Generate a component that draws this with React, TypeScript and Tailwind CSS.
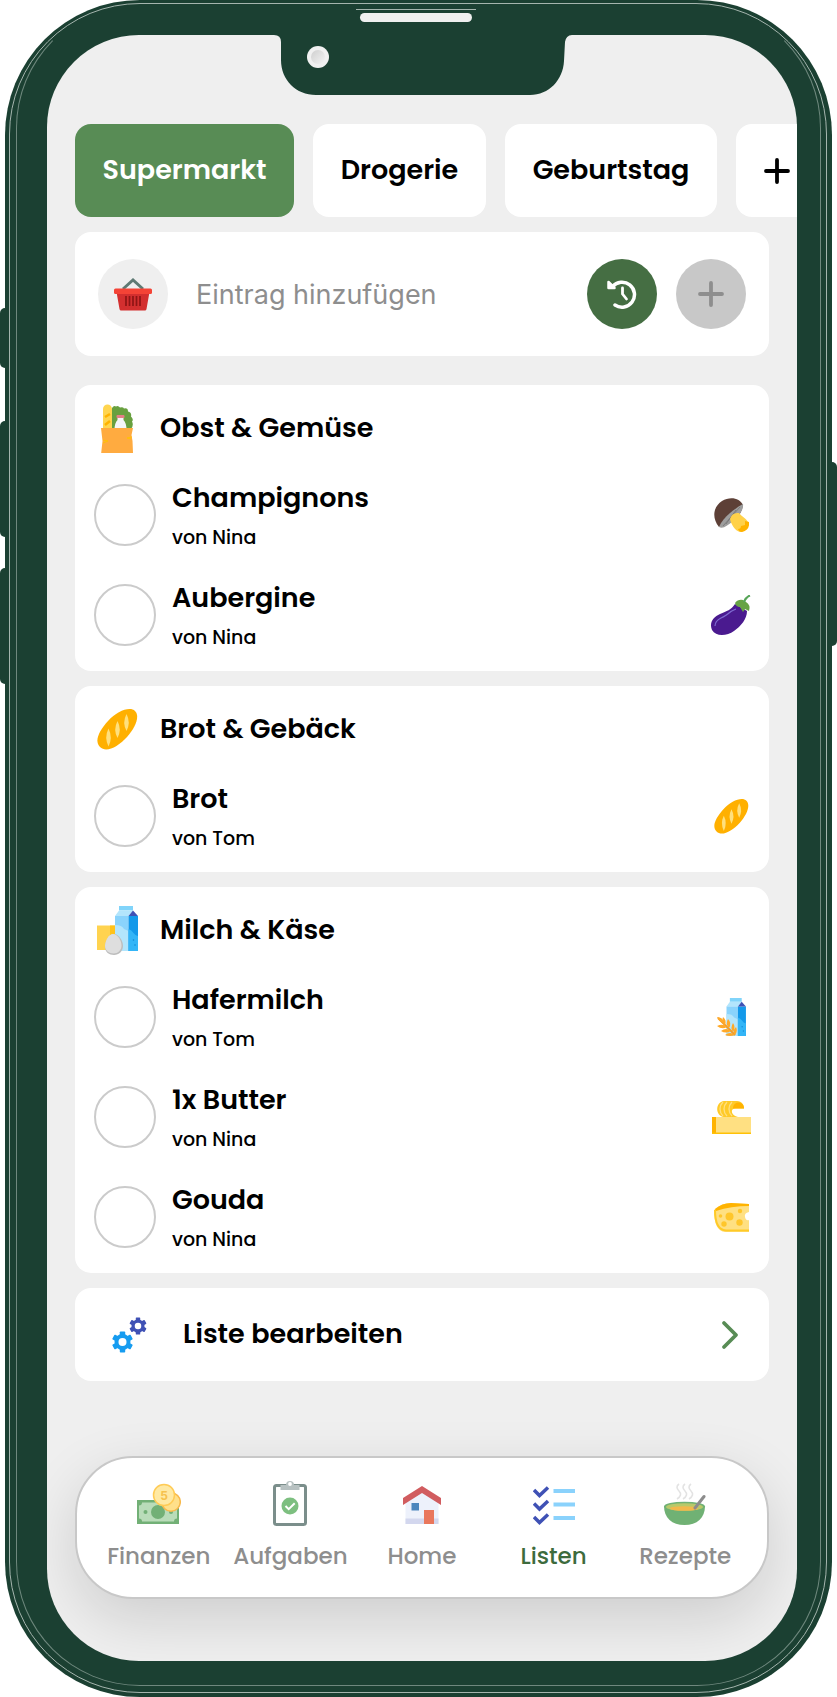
import { useState, type ReactNode } from 'react';

type ListItem = { id: string; name: string; by: string; icon: ReactNode };
type Category = { title: string; icon: ReactNode; items: ListItem[] };

function BasketIcon() {
  return (
    <svg width="38" height="33" viewBox="0 0 38 33">
      <path d="M9 11 19 2l10 9" fill="none" stroke="#5f7a74" strokeWidth="3" />
      <path d="M2.5 14h33L32.5 31q-.2 1.5-1.6 1.5H7.1q-1.4 0-1.6-1.5z" fill="#d32f2f" />
      <rect y="10.5" width="38" height="5.5" rx="1.5" fill="#f44336" />
      <path d="M12 18v10M15.5 18v10M19 18v10M22.5 18v10M26 18v10" stroke="#8e1515" strokeWidth="1.7" />
    </svg>
  );
}

function GroceriesIcon() {
  return (
    <svg width="32" height="49" viewBox="0 0 32 49">
      <path d="M11 25V4q2-3 4-1.500 2-1.500 4 1 3-1 4 1 4-1 4 3 4 1 3 5 3 3 1 5 2 4-1 7.500z" fill="#68a03f" />
      <path d="M2 26V5a4.500 4.500 0 0 1 9 0v21z" fill="#ffd54f" />
      <path d="m4 13 5-3M4 21l5-4" stroke="#ffb300" strokeWidth="2.5" />
      <path d="M16.500 13h6v3q3 3 3 10h-12q0-7 3-10z" fill="#f4f6f7" />
      <rect x="15.500" y="11" width="8" height="3" rx="1" fill="#e57f86" />
      <path d="M0 24h32l-1.500 7 1 6 .5 12H.2L1.500 37z" fill="#ffab40" />
      <path d="m2 36 5 1-5 2M31 33l-5 1 4 1" fill="none" stroke="#ffc107" />
    </svg>
  );
}

function BreadIcon({ className }: { className: string }) {
  return (
    <svg className={className} viewBox="0 0 41 41">
      <path d="M3 38C-3 32 2 22 11 12S33-3 38 2s1 16-8 26S9 44 3 38z" fill="#ffb000" />
      <g fill="#ffe07d">
        <path d="M11.500 19.500q4.500 9 0 18-4.500-9 0-18z" />
        <path d="M20.500 12q4.500 8.500 0 17-4.500-8.500 0-17z" />
        <path d="M29.500 5q4.500 8.500 0 17-4.500-8.500 0-17z" />
      </g>
    </svg>
  );
}

// milk carton, 23 x 45, shared by the category icon and the oat milk icon
function Carton() {
  return (
    <g>
      <path d="M4 0h14v4.500H4z" fill="#81d4fa" />
      <path d="M4 4.500h14L13.500 10H0z" fill="#b3e5fc" />
      <path d="M0 10h13.500v35H0z" fill="#8ad3fc" />
      <path d="M0 19q7 0 9 4l4.500 2v20H0z" fill="#b3e5fc" />
      <path d="M13.500 10H23v35h-9.500z" fill="#1399ea" />
      <path d="M13.500 23q3 1 5 4t4.500 3v15h-9.500z" fill="#33b5f7" />
      <path d="M18 4.500 23 10h-9.500z" fill="#3f51b5" />
      <circle cx="18.500" cy="34" r=".8" fill="#1288d6" />
      <circle cx="20" cy="39" r=".8" fill="#1288d6" />
    </g>
  );
}

function DairyIcon() {
  return (
    <svg width="41" height="49" viewBox="0 0 41 49">
      <path d="M0 19.500h18V44H0z" fill="#ffd34f" />
      <path d="M13 19.500h5V29h-5z" fill="#ffc21a" />
      <g transform="translate(18)">
        <Carton />
      </g>
      <path d="M17 28c5 0 9 7 9 12s-4 9-9 9-9-3-9-8 4-13 9-13z" fill="#bdbdbd" />
      <path d="M16 28c5 0 8.500 7 8.500 11.500S21 47.500 16.500 47.500 8 44.500 8 40s3.500-12 8-12z" fill="#dedede" />
    </svg>
  );
}

function MushroomIcon() {
  return (
    <svg width="35" height="34" viewBox="0 0 35 34">
      <path d="M5 29C-3 19 0 8 8 3s18-3 21 4q-2 12-11 16T5 29z" fill="#5d4037" />
      <path d="M29 6c1 5-4 12-10 17S9 31 5 29c2-5 6-10 11-14S25 8 29 6z" fill="#9e9e9e" />
      <path d="M26 9 9 28M22 12 12 26" stroke="#757575" strokeWidth=".8" />
      <path d="M16 21q2-7 9-6c3 4 7 5 9 9 2 5-3 10-8 10-5-1-9-8-10-13z" fill="#ffd149" />
      <path d="M24 31q3 0 3-3l4-1v-4l4 1q1 8-7 10-3 0-4-3z" fill="#ffb300" />
    </svg>
  );
}

function AubergineIcon() {
  return (
    <svg width="40" height="40" viewBox="0 0 40 40">
      <path d="M24 9l12 7c0 8-6 15-13 20S5 42 1 35c-3-7 1-13 8-16S20 15 24 9z" fill="#4a1a8f" />
      <path d="M4 31q0-5 6-8t8-5 7-4" fill="none" stroke="#7e6bd0" strokeWidth="1.2" />
      <path d="M24 8q3-4 8-3l3 2q5 3 3 9l-4-2-2 3-3-5q-4 0-5-4z" fill="#66a344" />
      <path d="M33 7q2-5 6-6.500" fill="none" stroke="#57a558" strokeWidth="2.2" />
    </svg>
  );
}

function OatMilkIcon() {
  return (
    <svg width="29" height="38" viewBox="0 0 29 38">
      <g transform="translate(9.500) scale(.845)">
        <Carton />
      </g>
      <path d="M1 20 18 37" stroke="#f29b28" strokeWidth="2" />
      <g fill="#ffa928">
        <path d="M0 19q6 0 7 6-5-1-7-6z" />
        <path d="M6 19q4 3 2 8-4-3-2-8zM11 21q4 4 1 9-4-4-1-9zM16 25q3 4 0 9-3-4 0-9zM19 29q2 4-1 8-3-4 1-8z" />
        <path d="M0 28q6-3 10 1-5 3-10-1zM4 33q5-4 10 0-5 3-10 0zM8 37q5-4 10 0-5 2-10 0z" />
      </g>
    </svg>
  );
}

function ButterIcon() {
  return (
    <svg width="39" height="33" viewBox="0 0 39 33">
      <path d="M12 0h13c5 0 7 4 7 7.500h-8q-5 0-4 4 1 3 6 4.500H12C3 15 3 1 12 0z" fill="#ffca28" />
      <path d="M32 7.500c0-7.500-10-8-11-1v1z" fill="#ffb300" />
      <path d="M11 1c-4 4-4 10 0 14M15 1c-4 4-4 10 0 14M20 1c-4 4-4 10 0 14" fill="none" stroke="#ffe082" strokeWidth="1.3" />
      <path d="M0 16h39v17H0z" fill="#ffe082" />
      <path d="M0 16h4v17H0z" fill="#ffb300" />
      <path d="M0 31.500h39V33H0z" fill="#ffc107" />
    </svg>
  );
}

function CheeseIcon() {
  return (
    <svg width="35" height="29" viewBox="0 0 35 29">
      <path d="M0 7q7-7 17-7l18 1v8q-5 1-4 5t4 3v12H11Q0 28 0 7z" fill="#ffe082" />
      <path d="M1 6q7-6 16-6l18 1v2q-18 0-33 5z" fill="#ffb300" />
      <path d="M1 7q0 20 11 20.500h23" fill="none" stroke="#ffca28" strokeWidth="2" />
      <g fill="#ffc62b">
        <circle cx="15.500" cy="13.500" r="4" />
        <circle cx="26" cy="8" r="2.200" />
        <circle cx="25.500" cy="19.500" r="3.200" />
        <circle cx="10" cy="21" r="2.700" />
        <circle cx="6.500" cy="13" r="1.800" />
      </g>
    </svg>
  );
}

function Gear({ cx, cy, scale, color }: { cx: number; cy: number; scale: number; color: string }) {
  return (
    <g transform={`translate(${cx} ${cy}) scale(${scale})`} fill={color}>
      {[0, 60, 120].map((angle) => (
        <rect key={angle} x="-2.700" y="-10.500" width="5.400" height="21" rx=".8" transform={`rotate(${angle})`} />
      ))}
      <circle r="8" />
      <circle r="4" fill="#fff" />
    </g>
  );
}

function GearsIcon() {
  return (
    <svg width="35" height="36" viewBox="0 0 35 36">
      <Gear cx={26} cy={9} scale={0.82} color="#3f51b5" />
      <Gear cx={10.5} cy={25} scale={1} color="#169cf0" />
    </svg>
  );
}

function HistoryIcon() {
  return (
    <svg width="30" height="30" viewBox="0 0 30 30" fill="none" stroke="#fff" strokeLinecap="round" strokeLinejoin="round">
      <path d="M5.500 7.500A12.500 12.500 0 1 1 8 26" strokeWidth="3.500" />
      <path d="M1.500 3v6h6z" fill="#fff" strokeWidth="2.500" />
      <path d="M15.500 9v6l4 5" strokeWidth="2.800" />
    </svg>
  );
}

function PlusIcon() {
  return (
    <svg className="shrink-0" width="26" height="26" viewBox="0 0 26 26" stroke="currentColor" strokeWidth="3.800" strokeLinecap="round">
      <path d="M13 2v22M2 13h22" />
    </svg>
  );
}

function MoneyIcon() {
  return (
    <svg width="44" height="46" viewBox="0 -4 44 46">
      <path d="M0 16h42v24H0z" fill="#72b076" />
      <path d="M5 18.500h32q0 3 3 3v13q-3 0-3 3H5q0-3-3-3v-13q3 0 3-3z" fill="#b9dcb9" />
      <circle cx="21" cy="28" r="7" fill="#72b076" />
      <circle cx="8.500" cy="28" r="2" fill="#72b076" />
      <circle cx="34" cy="28" r="2" fill="#72b076" />
      <circle cx="34" cy="18" r="9.300" fill="#ffe08a" stroke="#f8b84a" strokeWidth="1.5" />
      <circle cx="27" cy="11" r="10.500" fill="#ffe9a3" stroke="#ffcb55" strokeWidth="1.5" />
      <text x="27" y="15.500" textAnchor="middle" fontSize="12" fontWeight="700" fill="#f6c14d" className="font-['Inter',sans-serif]">5</text>
    </svg>
  );
}

function ClipboardIcon() {
  return (
    <svg width="34" height="46" viewBox="0 0 34 46">
      <rect x="1.500" y="5.500" width="31" height="39" rx="2" fill="#fff" stroke="#7b8e8b" strokeWidth="3" />
      <path d="M7.500 10V5H13a4 4 0 0 1 8 0h5.500v5z" fill="#b7c1c1" />
      <circle cx="17" cy="4" r="1.900" fill="#fff" />
      <circle cx="17" cy="26" r="8.500" fill="#7dbf80" />
      <path d="m12.500 26 3.200 3.200 6-6" fill="none" stroke="#fff" strokeWidth="2" />
    </svg>
  );
}

function HouseIcon() {
  return (
    <svg width="38" height="46" viewBox="0 -6 38 46">
      <path d="M2.500 16 19 3l16.500 13v22h-33z" fill="#edf1fb" />
      <path d="M2.500 32.500h33V38h-33z" fill="#d3d7ee" />
      <path d="M0 12 19 0l19 12v7L19 7 0 19z" fill="#d15c5f" />
      <path d="M8.500 17H16v7.500H8.500z" fill="#4d87bd" />
      <path d="M21 24h10v14H21z" fill="#e9775c" />
    </svg>
  );
}

function ChecklistIcon() {
  return (
    <svg width="42" height="46" viewBox="0 -5 42 46">
      <path d="m1 5 5.500 5.500 8.500-8M1 18.500l5.500 5.500 8.500-8M1 32l5.500 5.500 8.500-8" fill="none" stroke="#3f51b5" strokeWidth="3.500" />
      <path d="M20.500 6H42M20.500 19.500H42M20.500 33H42" stroke="#8ad2fc" strokeWidth="4.200" />
    </svg>
  );
}

function SoupIcon() {
  return (
    <svg width="42" height="46" viewBox="0 -4 42 46">
      <g fill="none" stroke="#e3e3e3" strokeWidth="1.6">
        <path d="M15 0q-4 3 0 7t-2 8M21 0q-4 3 0 7t-2 8M27 0q-4 3 0 7t-2 8" />
      </g>
      <path d="M0 22h41c0 12-8 19-20.500 19S0 34 0 22z" fill="#70b174" />
      <ellipse cx="20.500" cy="22.500" rx="20.500" ry="4.800" fill="#70b174" />
      <ellipse cx="20.500" cy="23" rx="18.500" ry="3.800" fill="#b8c96a" />
      <ellipse cx="20" cy="24.500" rx="14" ry="2.300" fill="#f2b84c" />
      <path d="m31 24 9-11.500" stroke="#8c8c8c" strokeWidth="3" strokeLinecap="round" />
    </svg>
  );
}

const LISTS = [
  { name: 'Supermarkt', width: 'min-w-[219px]' },
  { name: 'Drogerie', width: 'min-w-[173px]' },
  { name: 'Geburtstag', width: 'min-w-[212px]' },
];

const CATEGORIES: Category[] = [
  {
    title: 'Obst & Gemüse',
    icon: <GroceriesIcon />,
    items: [
      { id: 'champignons', name: 'Champignons', by: 'Nina', icon: <MushroomIcon /> },
      { id: 'aubergine', name: 'Aubergine', by: 'Nina', icon: <AubergineIcon /> },
    ],
  },
  {
    title: 'Brot & Gebäck',
    icon: <BreadIcon className="size-[41px]" />,
    items: [{ id: 'brot', name: 'Brot', by: 'Tom', icon: <BreadIcon className="size-[35px]" /> }],
  },
  {
    title: 'Milch & Käse',
    icon: <DairyIcon />,
    items: [
      { id: 'hafermilch', name: 'Hafermilch', by: 'Tom', icon: <OatMilkIcon /> },
      { id: 'butter', name: '1x Butter', by: 'Nina', icon: <ButterIcon /> },
      { id: 'gouda', name: 'Gouda', by: 'Nina', icon: <CheeseIcon /> },
    ],
  },
];

const NAV = [
  { label: 'Finanzen', icon: <MoneyIcon /> },
  { label: 'Aufgaben', icon: <ClipboardIcon /> },
  { label: 'Home', icon: <HouseIcon /> },
  { label: 'Listen', icon: <ChecklistIcon /> },
  { label: 'Rezepte', icon: <SoupIcon /> },
];

function ListTabs() {
  const [active, setActive] = useState('Supermarkt');

  return (
    <div className="flex gap-[19px] overflow-hidden pl-7">
      {LISTS.map((list) => (
        <button
          key={list.name}
          type="button"
          onClick={() => setActive(list.name)}
          className={`h-[93px] shrink-0 rounded-2xl text-[27px] font-semibold ${list.width} ${
            active === list.name ? 'bg-[#588c55] text-white' : 'bg-white text-black'
          }`}
        >
          {list.name}
        </button>
      ))}
      <button type="button" aria-label="Neue Liste" className="flex h-[93px] w-[82px] shrink-0 items-center rounded-2xl bg-white pl-7">
        <PlusIcon />
      </button>
    </div>
  );
}

function AddEntry() {
  return (
    <form className="flex h-[124px] items-center rounded-2xl bg-white px-[23px]" onSubmit={(e) => e.preventDefault()}>
      <div className="flex size-[70px] shrink-0 items-center justify-center rounded-full bg-[#efefef]">
        <BasketIcon />
      </div>
      <input
        type="text"
        aria-label="Eintrag hinzufügen"
        placeholder="Eintrag hinzufügen"
        className="mx-7 h-12 min-w-0 flex-1 bg-transparent font-['Inter',sans-serif] text-[27px] outline-none placeholder:text-[#8e8e8e]"
      />
      <button type="button" aria-label="Verlauf" className="flex size-[70px] shrink-0 items-center justify-center rounded-full bg-[#456e43]">
        <HistoryIcon />
      </button>
      <button
        type="submit"
        aria-label="Hinzufügen"
        className="ml-[19px] flex size-[70px] shrink-0 items-center justify-center rounded-full bg-[#c8c8c8] text-[#8e8e8e]"
      >
        <PlusIcon />
      </button>
    </form>
  );
}

function CategoryCard({ category }: { category: Category }) {
  return (
    <section className="rounded-2xl bg-white pb-[6px]">
      <h2 className="flex h-20 items-center gap-[22px] pt-[6px] pl-[21px] text-[27px] font-semibold">
        <span className="flex w-[42px] justify-center">{category.icon}</span>
        {category.title}
      </h2>
      <ul>
        {category.items.map((item) => (
          <li key={item.id} className="flex h-[100px] items-center pr-[18px] pl-[19px]">
            <input
              id={item.id}
              type="checkbox"
              className="size-[62px] shrink-0 appearance-none rounded-full border-2 border-[#cbcbcb] checked:bg-[#588c55]"
            />
            <label htmlFor={item.id} className="ml-4 flex flex-1 flex-col gap-1">
              <span className="text-[27px] leading-[42px] font-semibold">{item.name}</span>
              <span className="text-[19px] leading-[30px] font-medium">von {item.by}</span>
            </label>
            <span className="flex w-10 justify-center">{item.icon}</span>
          </li>
        ))}
      </ul>
    </section>
  );
}

function BottomNav() {
  return (
    <nav className="mx-7 mt-auto mb-[62px] flex h-[143px] shrink-0 rounded-[58px] border-2 border-[#c8c8c8] bg-white px-4 pt-[22px] shadow-[0_20px_60px_rgba(0,0,0,0.14)]">
      {NAV.map(({ label, icon }) => (
        <a
          key={label}
          href={`#${label.toLowerCase()}`}
          className={`flex flex-1 basis-0 flex-col items-center gap-3 text-[23px] leading-9 font-medium ${
            label === 'Listen' ? 'text-[#3d6b3d]' : 'text-[#8e8e8e]'
          }`}
        >
          {icon}
          {label}
        </a>
      ))}
    </nav>
  );
}

function Notch() {
  return (
    <div className="absolute inset-x-0 top-0 flex justify-center">
      <svg width="300" height="60" viewBox="0 0 300 60">
        <defs>
          <linearGradient id="lens" x1="0" y1="0" x2="1" y2="1">
            <stop offset="0" stopColor="#cfcfcf" />
            <stop offset="1" stopColor="#f4f4f4" />
          </linearGradient>
        </defs>
        <path d="M2 0q7 0 7 7v18c0 20 15 35 35 35h214c19 0 33-15 34-34l1-19q1-7 8-7z" fill="#1b4032" />
        <circle cx="46" cy="22" r="11" fill="#f1f1f1" />
        <circle cx="46" cy="22" r="7" fill="url(#lens)" />
      </svg>
    </div>
  );
}

export default function App() {
  return (
    <div className="relative flex min-h-screen flex-col bg-white px-[5px] font-['Poppins','Inter',sans-serif] text-black">
      {/* side keys */}
      <div className="absolute top-[308px] left-0 h-[60px] w-2 rounded-l-[5px] bg-[#1b4032]" />
      <div className="absolute top-[421px] left-0 h-[116px] w-2 rounded-l-[5px] bg-[#1b4032]" />
      <div className="absolute top-[568px] left-0 h-[116px] w-2 rounded-l-[5px] bg-[#1b4032]" />
      <div className="absolute top-[462px] right-0 h-[184px] w-2 rounded-r-[5px] bg-[#1b4032]" />

      <div className="relative flex flex-1 flex-col rounded-[135px] bg-[#1b4032] pt-[3px] pr-[5px] pb-1 pl-1">
        <div className="flex flex-1 flex-col rounded-[131px] border border-[#a5b5ae] pr-[5px] pb-[6px] pl-[6px]">
          <div className="flex flex-1 flex-col rounded-[124px] border border-[#6f887e] border-t-transparent pr-[23px] pb-6 pl-[30px]">
            {/* speaker */}
            <div className="flex h-[30px] shrink-0 flex-col items-center pt-1 pr-3">
              <div className="h-px w-[120px] bg-[#a5b5ae]" />
              <div className="mt-[3px] h-[9px] w-[112px] rounded-full bg-[#efefef]" />
            </div>

            <div className="relative flex flex-1 flex-col overflow-hidden rounded-[92px] bg-[#efefef] pt-[89px]">
              <Notch />
              <ListTabs />
              <main className="flex flex-col gap-[15px] px-7 pt-[15px] pb-8">
                <AddEntry />
                <div className="mt-[14px] flex flex-col gap-[15px]">
                  {CATEGORIES.map((category) => (
                    <CategoryCard key={category.title} category={category} />
                  ))}
                </div>
                <button type="button" className="flex h-[93px] items-center rounded-2xl bg-white pr-[30px] pl-[37px] text-left text-[27px] font-semibold">
                  <GearsIcon />
                  <span className="ml-9 flex-1">Liste bearbeiten</span>
                  <svg width="18" height="30" viewBox="0 0 18 30" fill="none" stroke="#588c55" strokeWidth="3.8" strokeLinecap="round" strokeLinejoin="round">
                    <path d="m3 3 12 12L3 27" />
                  </svg>
                </button>
              </main>
              <BottomNav />
            </div>
          </div>
        </div>
      </div>
    </div>
  );
}
